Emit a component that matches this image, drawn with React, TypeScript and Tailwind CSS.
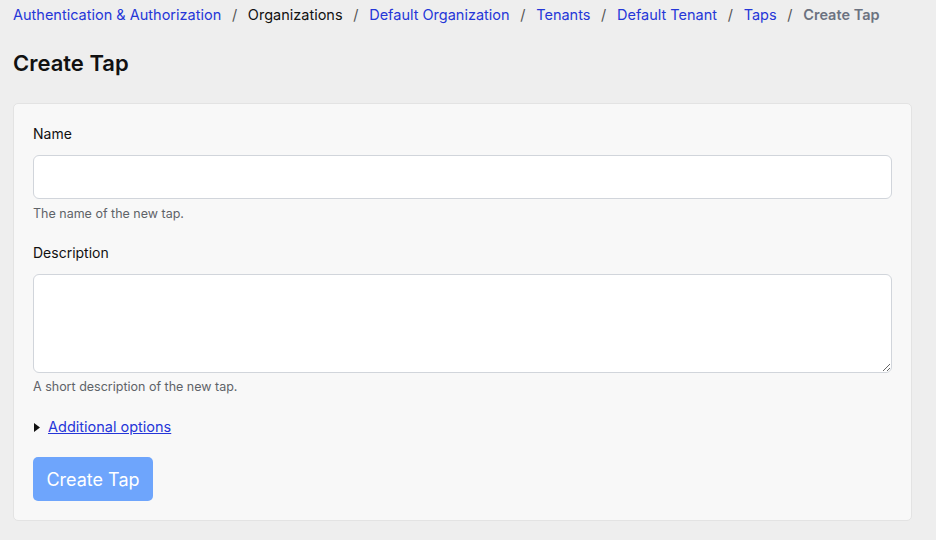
import React from "react";

const crumbs = [
  { label: "Authentication & Authorization", link: true },
  { label: "Organizations", link: false },
  { label: "Default Organization", link: true },
  { label: "Tenants", link: true },
  { label: "Default Tenant", link: true },
  { label: "Taps", link: true },
];

const App = () => {
  return (
    <div className="min-h-screen w-[936px] bg-[#eeeeee] px-[13px] pt-[5px] font-['Inter',sans-serif] text-[#111111]">
      {/* Breadcrumb */}
      <nav className="flex items-center text-[14.5px] leading-[20px]">
        {crumbs.map((c) => (
          <React.Fragment key={c.label}>
            <a
              href="#"
              className={c.link ? "text-[#2536d8]" : "text-[#111111]"}
            >
              {c.label}
            </a>
            <span className="mx-[10.7px] text-[#555555]">/</span>
          </React.Fragment>
        ))}
        <span className="font-semibold text-[#6b7280]">Create Tap</span>
      </nav>

      <h1 className="mt-[24px] text-[22px] font-semibold leading-[28px]">
        Create Tap
      </h1>

      {/* Form card */}
      <div className="mt-[26px] w-[899px] rounded-[5px] border border-[#e3e3e3] bg-[#f8f8f8] px-[19px] pt-[20px] pb-[19px]">
        <label className="block text-[14px] leading-[20px]">Name</label>
        <input
          type="text"
          className="mt-[11px] block h-[44px] w-full rounded-[6px] border border-[#d1d5db] bg-white"
        />
        <p className="mt-[7px] text-[12.5px] leading-[16px] text-[#5f6368]">
          The name of the new tap.
        </p>

        <label className="mt-[21px] block text-[14px] leading-[20px]">
          Description
        </label>
        <textarea className="mt-[11px] block h-[99px] w-full rounded-[6px] border border-[#d1d5db] bg-white" />
        <p className="mt-[6px] text-[12.5px] leading-[16px] text-[#5f6368]">
          A short description of the new tap.
        </p>

        <div className="mt-[22px] flex items-center text-[14.5px] leading-[20px]">
          <svg width="6" height="9" viewBox="0 0 6 9" className="ml-[1px] mr-[8px]">
            <path d="M0 0 L6 4.5 L0 9 Z" fill="#111111" />
          </svg>
          <a href="#" className="text-[#2536d8] underline">
            Additional options
          </a>
        </div>

        <button className="mt-[20px] h-[44px] w-[120px] rounded-[5px] bg-[#6ea5fc] text-[18px] text-white">
          Create Tap
        </button>
      </div>
    </div>
  );
};

export default App;
